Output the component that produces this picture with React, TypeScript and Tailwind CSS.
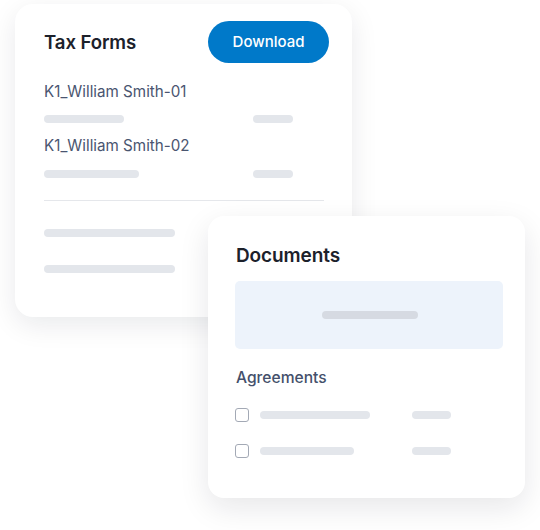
const Bar = ({ w, color = 'bg-[#e3e6eb]' }: { w: string; color?: string }) => (
    <div className={`h-2 rounded-full ${w} ${color}`} />
);

function TaxForms() {
    const files = [
        { name: 'K1_William Smith-01', bar: 'w-[80px]' },
        { name: 'K1_William Smith-02', bar: 'w-[95px]' },
    ];

    return (
        <div className="absolute left-[15px] top-[4px] w-[337px] h-[313px] bg-white rounded-[18px] shadow-[0_8px_28px_rgba(15,23,42,0.09)] pl-[29px] pr-[28px] pt-[17px]">
            {/* Header */}
            <div className="flex items-center justify-between h-[42px]">
                <h2 className="text-[18.6px] font-semibold text-[#1c212b] leading-none tracking-[-0.1px]">Tax Forms</h2>
                <button className="-mr-[5px] w-[121px] h-[42px] rounded-full bg-[#0079c9] text-white text-[15px] font-medium">
                    Download
                </button>
            </div>

            {files.map((f, i) => (
                <div key={f.name} className={i === 0 ? 'mt-[19px]' : 'mt-[13px]'}>
                    <p className="text-[15.2px] leading-[20px] text-[#4a5570]">{f.name}</p>
                    <div className={`flex items-center ${i === 0 ? 'mt-[13px]' : 'mt-[14px]'}`}>
                        <div className="w-[209px]">
                            <Bar w={f.bar} />
                        </div>
                        <Bar w="w-[40px]" />
                    </div>
                </div>
            ))}

            <div className="mt-[22px] h-px bg-[#e5e7eb]" />

            <div className="mt-[28px] flex flex-col gap-[28px]">
                <Bar w="w-[131px]" />
                <Bar w="w-[131px]" />
            </div>
        </div>
    );
}

function Documents() {
    const rows = ['w-[110px]', 'w-[94px]'];

    return (
        <div className="absolute left-[208px] top-[216px] w-[317px] h-[282px] bg-white rounded-[16px] shadow-[0_10px_30px_rgba(15,23,42,0.1)] pl-[27px] pt-[28px]">
            <h2 className="pl-px text-[19px] leading-[24px] font-semibold text-[#1c212b] tracking-[-0.1px]">Documents</h2>

            <div className="mt-[13px] w-[268px] h-[68px] rounded-[5px] bg-[#edf3fb] flex items-center justify-center">
                <div className="ml-[2px] h-2 w-[96px] rounded-full bg-[#d6dae2]" />
            </div>

            <p className="mt-[19px] pl-px text-[15.6px] leading-[20px] font-medium text-[#44506b]">Agreements</p>

            {rows.map((w, i) => (
                <div key={i} className={`flex items-center ${i === 0 ? 'mt-[20px]' : 'mt-[22px]'}`}>
                    <div className="w-[14px] h-[14px] rounded-[3px] border border-[#a3a9b5] bg-white" />
                    <div className="ml-[11px] w-[152px]">
                        <Bar w={w} />
                    </div>
                    <Bar w="w-[39px]" />
                </div>
            ))}
        </div>
    );
}

export default function App() {
    return (
        <div className="relative w-[540px] h-[530px] bg-white overflow-hidden font-['Inter','Liberation_Sans',sans-serif]">
            <TaxForms />
            <Documents />
        </div>
    );
}
